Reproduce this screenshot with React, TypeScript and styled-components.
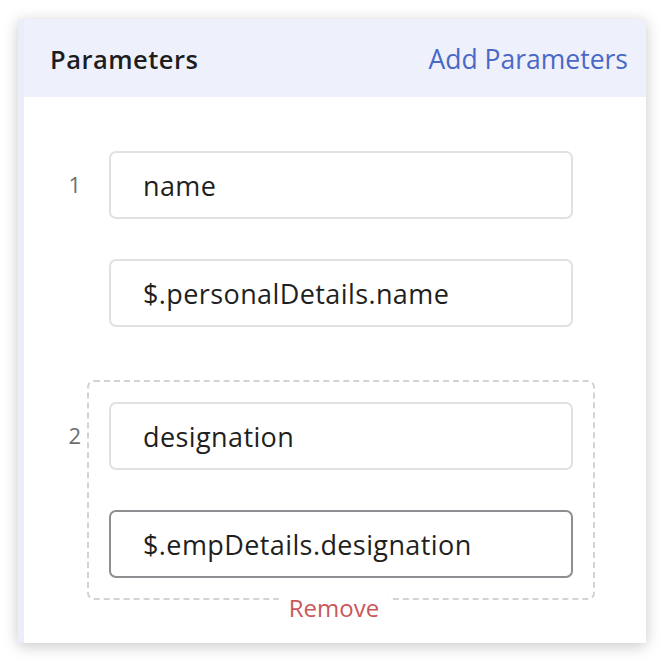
import styled, { createGlobalStyle } from "styled-components";

const GlobalStyle = createGlobalStyle`
  html, body {
    margin: 0;
    padding: 0;
    background: #ffffff;
  }
  body {
    font-family: "Open Sans", "Liberation Sans", sans-serif;
    color: #222222;
  }
`;

const Page = styled.div`
  padding: 19px 18px 19px 18px;
`;

const Card = styled.div`
  height: 624px;
  box-sizing: border-box;
  background: #ffffff;
  border-left: 6px solid #ebeef9;
  box-shadow: 0 3px 14px rgba(0, 0, 0, 0.22);
  display: flex;
  flex-direction: column;
`;

const Header = styled.div`
  height: 78px;
  flex-shrink: 0;
  background: #eef1fc;
  display: flex;
  align-items: center;
  justify-content: space-between;
  padding: 0 18px 0 26px;

  .title {
    font-size: 25.5px;
    font-weight: 600;
    letter-spacing: 0.5px;
    color: #1d1d1f;
    margin-top: 2px;
  }
  .add {
    font-size: 26.5px;
    color: #4a68c6;
    margin-top: 2px;
    cursor: pointer;
  }
`;

const Body = styled.div`
  padding: 32px 51px 0 23px;
  display: flex;
  flex-direction: column;
  gap: 31px;
`;

const GroupRow = styled.div`
  display: flex;
  align-items: flex-start;
`;

const Index = styled.div`
  width: 40px;
  flex-shrink: 0;
  padding-right: 6px;
  box-sizing: border-box;
  text-align: right;
  font-size: 22px;
  color: #6e6e72;
  margin-top: 40px;
`;

const Group = styled.div<{ $selected?: boolean }>`
  position: relative;
  flex: 1;
  padding: 20px;
  border: 2px dashed ${(p) => (p.$selected ? "#d3d3d6" : "transparent")};
  border-radius: 7px;
  display: flex;
  flex-direction: column;
  gap: 40px;
`;

const Field = styled.div<{ $focused?: boolean }>`
  height: 68px;
  box-sizing: border-box;
  border: 2px solid ${(p) => (p.$focused ? "#8d8d92" : "#e1e1e4")};
  border-radius: 7px;
  padding-left: 32px;
  display: flex;
  align-items: center;
  font-size: 27px;
  letter-spacing: 0.4px;
  color: #1f1f21;
  background: #ffffff;
`;

const RemoveLink = styled.span`
  position: absolute;
  left: calc(50% - 7px);
  bottom: -10px;
  transform: translate(-50%, 50%);
  background: #ffffff;
  padding: 0 10px;
  font-size: 24px;
  line-height: 24px;
  color: #c9585a;
  cursor: pointer;
`;

interface Param {
  key: string;
  path: string;
}

const params: Param[] = [
  { key: "name", path: "$.personalDetails.name" },
  { key: "designation", path: "$.empDetails.designation" },
];

export default function App() {
  const active = 1;
  return (
    <>
      <GlobalStyle />
      <Page>
        <Card>
          <Header>
            <span className="title">Parameters</span>
            <span className="add">Add Parameters</span>
          </Header>
          <Body>
            {params.map((param, i) => (
              <GroupRow key={param.key}>
                <Index>{i + 1}</Index>
                <Group $selected={i === active}>
                  <Field>{param.key}</Field>
                  <Field $focused={i === active}>{param.path}</Field>
                  {i === active && <RemoveLink>Remove</RemoveLink>}
                </Group>
              </GroupRow>
            ))}
          </Body>
        </Card>
      </Page>
    </>
  );
}
